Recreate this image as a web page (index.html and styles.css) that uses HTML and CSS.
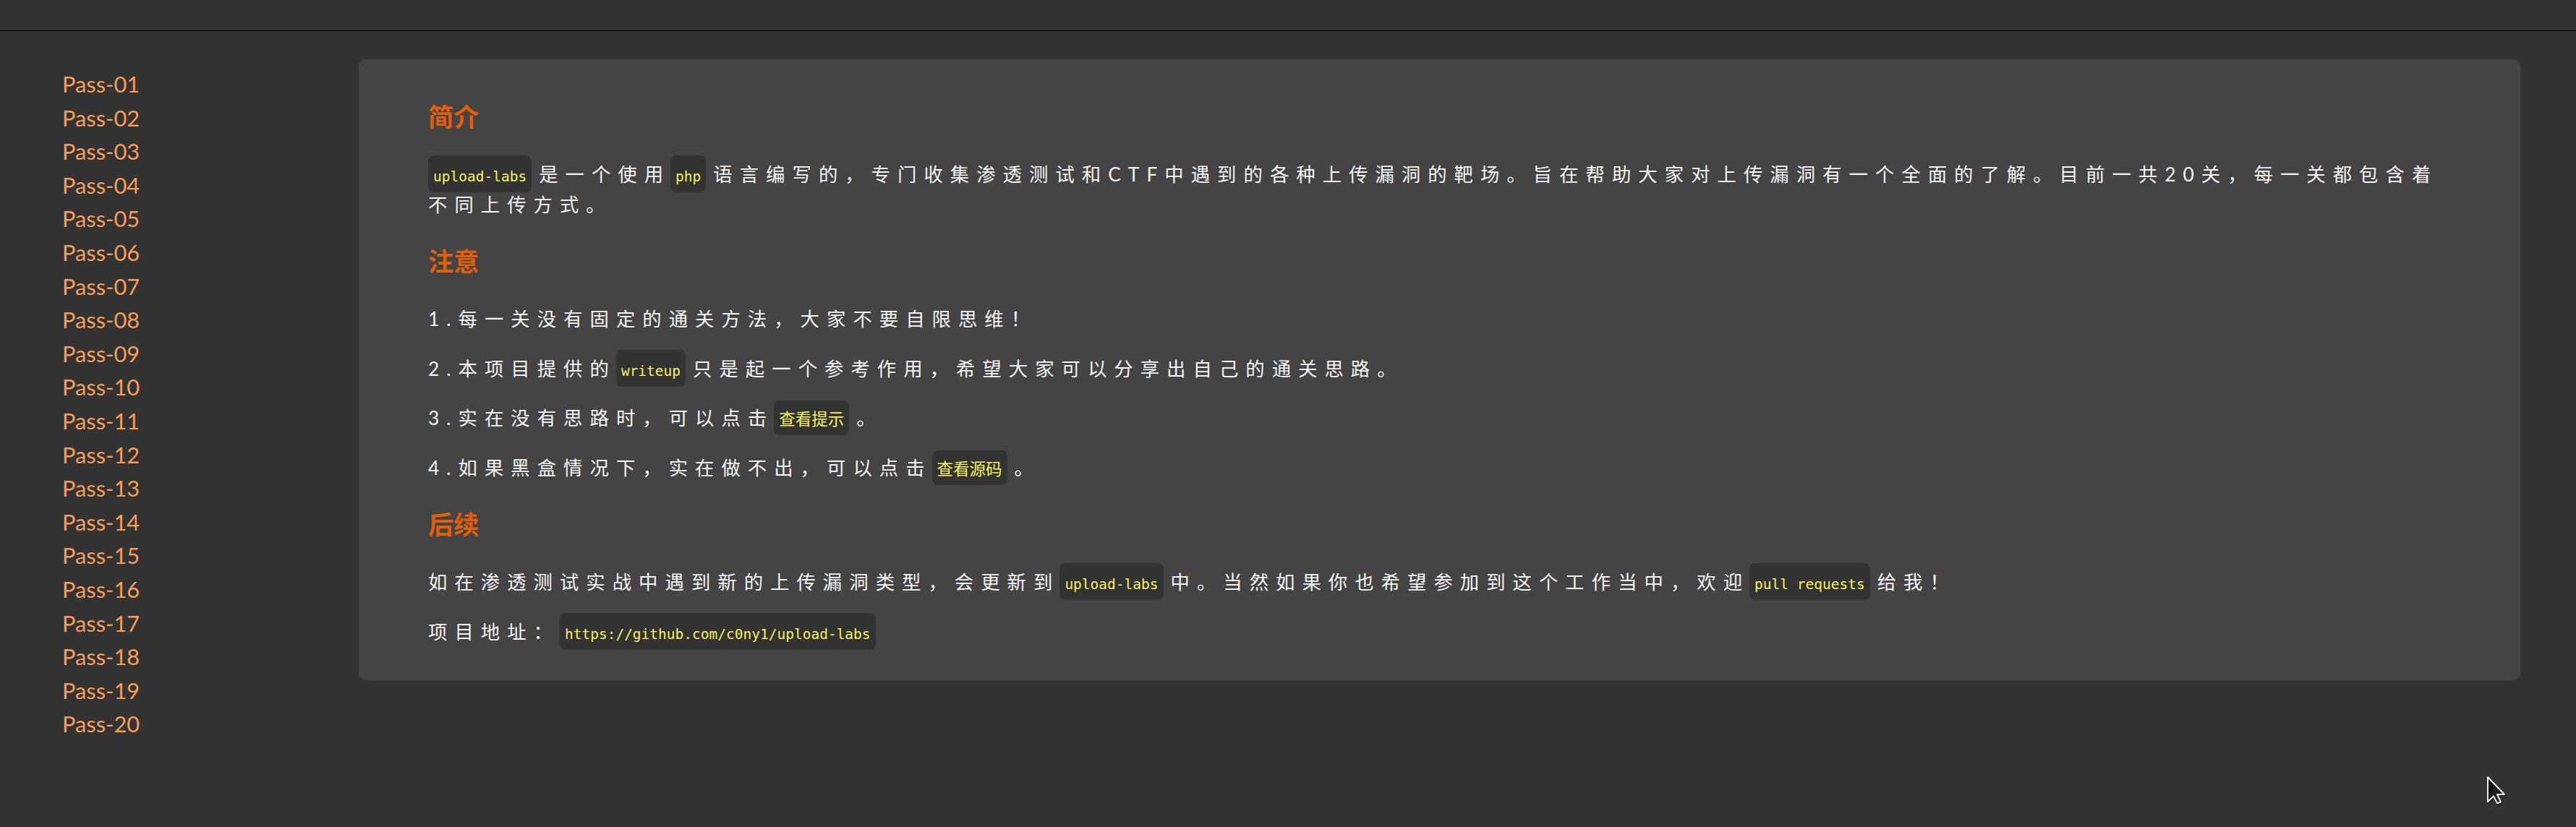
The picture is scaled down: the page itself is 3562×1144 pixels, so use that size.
FILE: index.html
```html
<!DOCTYPE html>
<html lang="zh-CN">
<head>
<meta charset="utf-8">
<title>upload-labs</title>
<link rel="stylesheet" href="styles.css">
</head>
<body>
<header class="topbar"></header>
<div class="main">
  <nav class="sidebar">
    <ul class="pass-list">
      <li class="pass-item"><a class="pass-link" href="#">Pass-01</a></li>
      <li class="pass-item"><a class="pass-link" href="#">Pass-02</a></li>
      <li class="pass-item"><a class="pass-link" href="#">Pass-03</a></li>
      <li class="pass-item"><a class="pass-link" href="#">Pass-04</a></li>
      <li class="pass-item"><a class="pass-link" href="#">Pass-05</a></li>
      <li class="pass-item"><a class="pass-link" href="#">Pass-06</a></li>
      <li class="pass-item"><a class="pass-link" href="#">Pass-07</a></li>
      <li class="pass-item"><a class="pass-link" href="#">Pass-08</a></li>
      <li class="pass-item"><a class="pass-link" href="#">Pass-09</a></li>
      <li class="pass-item"><a class="pass-link" href="#">Pass-10</a></li>
      <li class="pass-item"><a class="pass-link" href="#">Pass-11</a></li>
      <li class="pass-item"><a class="pass-link" href="#">Pass-12</a></li>
      <li class="pass-item"><a class="pass-link" href="#">Pass-13</a></li>
      <li class="pass-item"><a class="pass-link" href="#">Pass-14</a></li>
      <li class="pass-item"><a class="pass-link" href="#">Pass-15</a></li>
      <li class="pass-item"><a class="pass-link" href="#">Pass-16</a></li>
      <li class="pass-item"><a class="pass-link" href="#">Pass-17</a></li>
      <li class="pass-item"><a class="pass-link" href="#">Pass-18</a></li>
      <li class="pass-item"><a class="pass-link" href="#">Pass-19</a></li>
      <li class="pass-item"><a class="pass-link" href="#">Pass-20</a></li>
    </ul>
  </nav>
  <section class="panel">
    <h3 class="panel-title">简介</h3>
    <p class="panel-text"><code class="code">upload-labs</code>是一个使用<code class="code">php</code>语言编写的，专门收集渗透测试和CTF中遇到的各种上传漏洞的靶场。旨在帮助大家对上传漏洞有一个全面的了解。目前一共20关，每一关都包含着不同上传方式。</p>
    <h3 class="panel-title">注意</h3>
    <p class="panel-text">1.每一关没有固定的通关方法，大家不要自限思维！</p>
    <p class="panel-text">2.本项目提供的<code class="code">writeup</code>只是起一个参考作用，希望大家可以分享出自己的通关思路。</p>
    <p class="panel-text">3.实在没有思路时，可以点击<code class="code code-cjk">查看提示</code>。</p>
    <p class="panel-text">4.如果黑盒情况下，实在做不出，可以点击<code class="code code-cjk">查看源码</code>。</p>
    <h3 class="panel-title">后续</h3>
    <p class="panel-text">如在渗透测试实战中遇到新的上传漏洞类型，会更新到<code class="code">upload-labs</code>中。当然如果你也希望参加到这个工作当中，欢迎<code class="code">pull requests</code>给我！</p>
    <p class="panel-text">项目地址：<code class="code">https://github.com/c0ny1/upload-labs</code></p>
  </section>
</div>
<svg class="cursor" width="28" height="40" viewBox="0 0 14 20" aria-hidden="true">
  <defs>
    <linearGradient id="cg" x1="0" y1="0" x2="1" y2="1">
      <stop offset="0" stop-color="#000"/>
      <stop offset="1" stop-color="#3a3a3a"/>
    </linearGradient>
  </defs>
  <path d="M1 1 L1 18 L5 14.2 L7.6 19.2 L10 18.2 L7.5 13 L12.6 13 Z" fill="url(#cg)" stroke="#fff" stroke-width="0.9" stroke-linejoin="round"/>
</svg>
</body>
</html>
```

FILE: styles.css
```css
* {
  box-sizing: border-box;
}

html,
body {
  margin: 0;
  padding: 0;
}

body {
  position: relative;
  width: 3562px;
  min-height: 1144px;
  background: #333333;
  color: #f4f4f4;
  font-family: Lato, "Noto Sans CJK SC", sans-serif;
}

.topbar {
  height: 43px;
  border-bottom: 1px solid #000000;
}

.main {
  display: flex;
  align-items: flex-start;
  padding: 39px 77px 0 0;
}

.sidebar {
  flex: 0 0 496px;
  padding: 12px 0 0 86px;
}

.pass-list {
  list-style: none;
  margin: 0;
  padding: 0;
}

.pass-item {
  font-size: 30.8px;
  line-height: 46.6px;
}

.pass-link {
  color: #f89c58;
  text-decoration: none;
}

.panel {
  flex: 1;
  background: #444444;
  border-radius: 10px;
  padding: 22px 96px 20px 96px;
}

.panel-title {
  margin: 36px 0 38px;
  font-size: 35.2px;
  line-height: 1.2;
  font-weight: 700;
  color: #e25e08;
}

.panel-text {
  margin: 26.5px 0;
  font-size: 26.4px;
  line-height: 42px;
  letter-spacing: 10px;
}

.code {
  font-family: "DejaVu Sans Mono", "Noto Sans CJK SC", monospace;
  font-size: 19.5px;
  line-height: 1;
  letter-spacing: 0;
  color: #f4f25f;
  background: #333333;
  border-radius: 8px;
  padding: 18px 7px 10px;
  margin-right: 10px;
}

.code-cjk {
  font-size: 22.5px;
  padding: 13px 7px 9px;
}

.cursor {
  position: absolute;
  left: 3438px;
  top: 1073px;
  filter: drop-shadow(1px 2px 1px rgba(0, 0, 0, 0.5));
}
```
